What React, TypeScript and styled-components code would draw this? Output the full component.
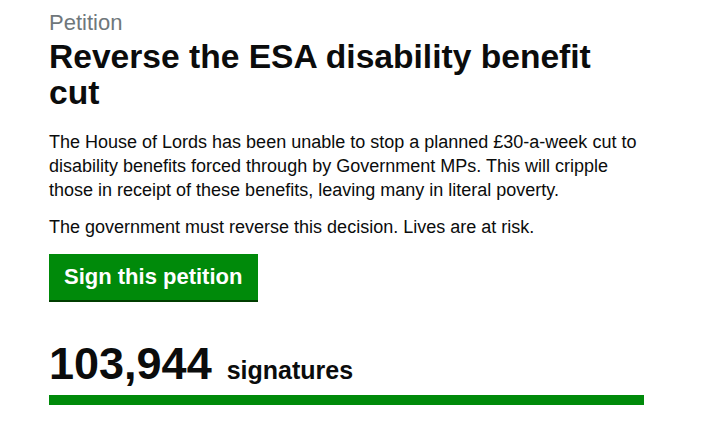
import React from 'react';
import styled, { createGlobalStyle } from 'styled-components';

const GlobalStyle = createGlobalStyle`
  body {
    margin: 0;
    background: #ffffff;
    color: #0b0c0c;
    font-family: "Liberation Sans", Arial, Helvetica, sans-serif;
  }
`;

const green = '#008a0a';

const Page = styled.main`
  padding: 10px 0 0 49px;
`;

const Content = styled.div`
  width: 595px;
`;

const Caption = styled.span`
  display: block;
  font-size: 22px;
  line-height: 25px;
  color: #6f777b;
`;

const Heading = styled.h1`
  margin: 4px 0 19px;
  font-size: 33.6px;
  line-height: 36px;
  font-weight: bold;
`;

const Paragraph = styled.p`
  margin: 0 0 13px;
  font-size: 18px;
  line-height: 24px;
`;

const SignButton = styled.a`
  display: inline-block;
  margin-top: 2px;
  padding: 10px 16px 10px 15px;
  font-size: 22px;
  line-height: 26px;
  font-weight: bold;
  color: #ffffff;
  background: ${green};
  box-shadow: 0 2px 0 #003d00;
  text-decoration: none;
  cursor: pointer;
`;

const Count = styled.p`
  display: flex;
  align-items: baseline;
  gap: 15px;
  margin: 42px 0 9px;
`;

const Number = styled.span`
  font-size: 45px;
  line-height: 44px;
  font-weight: bold;
`;

const Label = styled.span`
  font-size: 25px;
  line-height: 25px;
  font-weight: bold;
`;

const Progress = styled.div`
  height: 10px;
  background: ${green};
`;

export function PetitionSummary({ signatures }: { signatures: number }) {
  return (
    <Page>
      <Content>
        <Caption>Petition</Caption>
        <Heading>Reverse the ESA disability benefit cut</Heading>
        <Paragraph>
          The House of Lords has been unable to stop a planned £30-a-week cut to disability
          benefits forced through by Government MPs. This will cripple those in receipt of these
          benefits, leaving many in literal poverty.
        </Paragraph>
        <Paragraph>The government must reverse this decision. Lives are at risk.</Paragraph>
        <SignButton>Sign this petition</SignButton>
        <Count>
          <Number>{signatures.toLocaleString('en-GB')}</Number>
          <Label>signatures</Label>
        </Count>
        <Progress />
      </Content>
    </Page>
  );
}

export default function App() {
  return (
    <>
      <GlobalStyle />
      <PetitionSummary signatures={103944} />
    </>
  );
}
